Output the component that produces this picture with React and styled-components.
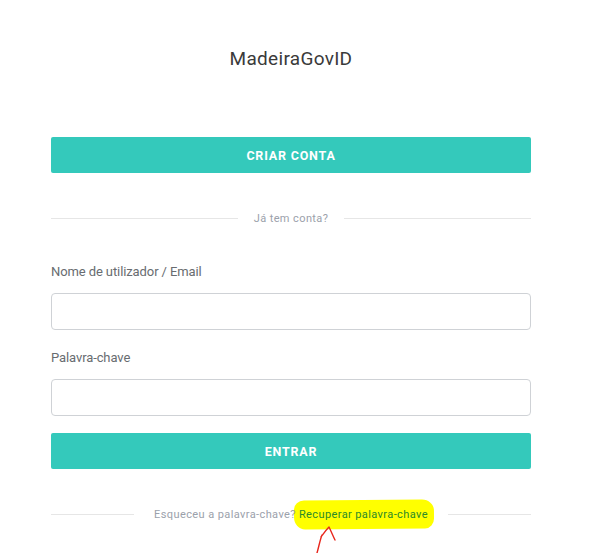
import React from 'react';
import styled, { createGlobalStyle } from 'styled-components';

const GlobalStyle = createGlobalStyle`
  html, body {
    margin: 0;
    padding: 0;
    background: #ffffff;
  }
  body {
    font-family: Roboto, "Liberation Sans", sans-serif;
  }
`;

const Page = styled.div`
  width: 590px;
  height: 553px;
  overflow: hidden;
  position: relative;
  padding-left: 51px;
  box-sizing: border-box;
`;

const Panel = styled.div`
  width: 480px;
  display: flex;
  flex-direction: column;
`;

const Title = styled.h1`
  margin: 47px 0 0;
  height: 24px;
  font-size: 19px;
  font-weight: 400;
  letter-spacing: 0.3px;
  color: #3a3a3a;
  text-align: center;
  line-height: 24px;
`;

const Button = styled.button`
  display: block;
  width: 100%;
  height: 36px;
  margin-top: ${p => p.$top}px;
  border: none;
  border-radius: 2px;
  background: #34c9bb;
  color: #ffffff;
  font-family: Roboto, "Liberation Sans", sans-serif;
  font-size: 12.5px;
  font-weight: 700;
  letter-spacing: 0.8px;
  text-transform: uppercase;
  cursor: pointer;
`;

const Divider = styled.div`
  display: flex;
  align-items: center;
  margin-top: ${p => p.$top}px;
  height: 16px;

  &::before,
  &::after {
    content: '';
    flex: 1;
    height: 1px;
    background: #e6e6e6;
  }
`;

const DividerText = styled.span`
  position: relative;
  isolation: isolate;
  padding: 0 ${p => p.$gap}px;
  font-size: 11px;
  letter-spacing: 0.4px;
  color: #9ba1ab;
  white-space: nowrap;
`;

const Label = styled.label`
  display: block;
  margin-top: ${p => p.$top}px;
  height: 16px;
  line-height: 16px;
  font-size: 13px;
  letter-spacing: -0.1px;
  color: #686c70;
`;

const Input = styled.input`
  display: block;
  width: 100%;
  height: 37px;
  margin-top: 13px;
  box-sizing: border-box;
  border: 1px solid #cfd2d6;
  border-radius: 4px;
  background: #fff;
  outline: none;
`;

const Link = styled.a`
  position: relative;
  color: #2a8a2a;
  text-decoration: none;
  margin-left: 3px;
`;

const Highlight = styled.span`
  position: absolute;
  left: -5px;
  right: -6px;
  top: -8px;
  bottom: -8px;
  background: #ffff00;
  border-radius: 10px 12px 9px 11px / 9px 11px 10px 12px;
  transform: rotate(-0.5deg);
  z-index: -1;
`;

const LinkText = styled.span`
  position: relative;
`;

const Arrow = styled.svg`
  position: absolute;
  left: 310px;
  top: 520px;
`;

export default function App() {
  return (
    <>
      <GlobalStyle />
      <Page>
        <Panel>
          <Title>MadeiraGovID</Title>
          <Button $top={66}>Criar conta</Button>
          <Divider $top={37}>
            <DividerText $gap={16}>Já tem conta?</DividerText>
          </Divider>
          <Label $top={38}>Nome de utilizador / Email</Label>
          <Input type="text" />
          <Label $top={20}>Palavra-chave</Label>
          <Input type="password" />
          <Button $top={17}>Entrar</Button>
          <Divider $top={37}>
            <DividerText $gap={20}>
              Esqueceu a palavra-chave?
              <Link href="#">
                <Highlight />
                <LinkText>Recuperar palavra-chave</LinkText>
              </Link>
            </DividerText>
          </Divider>
        </Panel>
        <Arrow width="30" height="33" viewBox="0 0 30 33">
          <path
            d="M7 33 C9 26 10 20 12 15 M11 17 C14 13 16 10 19 7 C21 11 23 16 25 20"
            fill="none"
            stroke="#e8261c"
            strokeWidth="1.4"
            strokeLinecap="round"
            strokeLinejoin="round"
          />
        </Arrow>
      </Page>
    </>
  );
}
